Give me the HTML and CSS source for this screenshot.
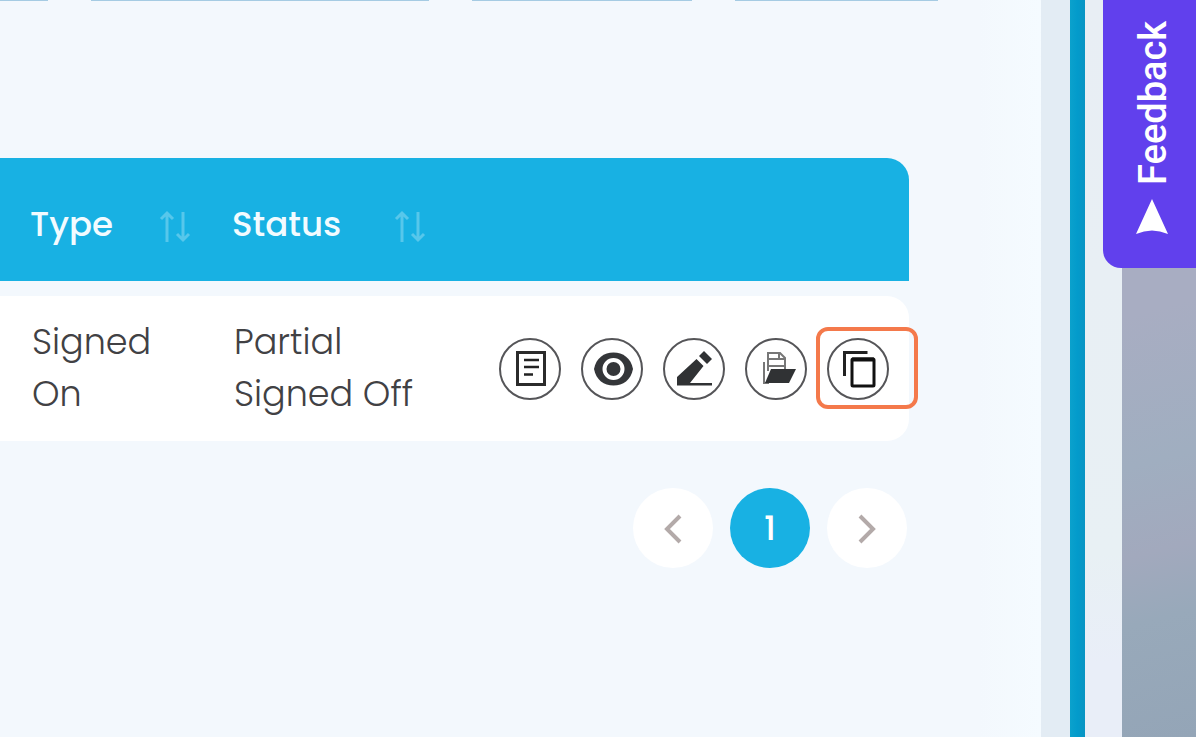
FILE: index.html
```
<!DOCTYPE html>
<html lang="en">
<head>
<meta charset="utf-8">
<title>Sign-on records</title>
<link rel="stylesheet" href="styles.css">
</head>
<body>
<main class="panel">
  <div class="filters">
    <span class="filter"></span><span class="filter"></span><span class="filter"></span><span class="filter"></span>
  </div>
  <table class="records">
    <colgroup><col class="col-type"><col class="col-status"><col></colgroup>
    <thead>
      <tr>
        <th><span class="heading heading-type">Type
          <svg class="sort" width="34" height="38" viewBox="0 0 34 38" aria-hidden="true"><path d="M9 36V7M3 13l6-6 6 6M25 6v28M19 28l6 6 6-6"/></svg></span></th>
        <th><span class="heading heading-status">Status
          <svg class="sort" width="34" height="38" viewBox="0 0 34 38" aria-hidden="true"><path d="M9 36V7M3 13l6-6 6 6M25 6v28M19 28l6 6 6-6"/></svg></span></th>
        <th></th>
      </tr>
    </thead>
    <tbody>
      <tr>
        <td>Signed<br>On</td>
        <td>Partial<br>Signed Off</td>
        <td class="actions-cell">
          <div class="actions">
            <button class="action" aria-label="Details"><svg width="60" height="60" viewBox="0 0 60 60"><path d="M16.500 12.500h27v32h-27z" fill="none" stroke="#2b2b2b" stroke-width="3"/><path d="M23 20h15M23 27h15M23 34.500h9" stroke="#222" stroke-width="2.500"/></svg></button>
            <button class="action" aria-label="View"><svg width="60" height="60" viewBox="0 0 60 60"><path d="M11 29C13 18 21 12.500 30.500 12.500S48 18 50 29C48 40 40 45.500 30.500 45.500S13 40 11 29z" fill="#343639"/><circle cx="30.500" cy="29" r="9" fill="#343639" stroke="#fff" stroke-width="4"/><circle cx="30.500" cy="29" r="5" fill="#343639"/></svg></button>
            <button class="action" aria-label="Edit"><svg width="60" height="60" viewBox="0 0 60 60"><path d="M12 45V37L31.500 19l7 7L25 43h22v2.500H12z" fill="#303234"/><path d="M34 16l5-5 8 8-5 5z" fill="#303234"/></svg></button>
            <button class="action" aria-label="Open file"><svg width="60" height="60" viewBox="0 0 60 60"><path d="M21 31V13h12l5 5v13" fill="#fff" stroke="#777" stroke-width="2"/><path d="M32 13v6h6M21 19h10M21 26h17" fill="none" stroke="#777" stroke-width="2"/><path d="M18 23h-1v20H22" fill="none" stroke="#777" stroke-width="2"/><path d="M24 29h25l-7 14H18z" fill="#303234"/></svg></button>
            <span class="highlighted"><button class="action" aria-label="Copy"><svg width="60" height="60" viewBox="0 0 60 60"><path d="M15.500 36V12.500h23" fill="none" stroke="#222" stroke-width="3"/><rect x="23" y="19" width="22" height="27" rx="1" fill="#fff" stroke="#111" stroke-width="3"/><path d="M23 19.500h22" stroke="#111" stroke-width="4"/></svg></button></span>
          </div>
        </td>
      </tr>
    </tbody>
  </table>
  <nav class="pages" aria-label="Pages">
    <button class="page" aria-label="Previous"><svg width="30" height="34" viewBox="0 0 30 34"><path d="M22 5L9 18l13 13"/></svg></button>
    <button class="page current" aria-current="page">1</button>
    <button class="page" aria-label="Next"><svg width="30" height="34" viewBox="0 0 30 34"><path d="M8 5l13 13L8 31"/></svg></button>
  </nav>
</main>
<div class="gutter"></div>
<div class="rail"></div>
<div class="margin"></div>
<aside class="photo"></aside>
<button class="feedback"><svg width="34" height="36" viewBox="0 0 34 36" aria-hidden="true"><path d="M1 1Q17 8 33 1L17 36z" fill="#fff"/></svg>Feedback</button>
</body>
</html>
```
FILE: styles.css
```
* { box-sizing: border-box; }
body {
  margin: 0;
  min-height: 100vh;
  display: flex;
  position: relative;
  overflow-x: hidden;
  font-family: Poppins, Inter, "Open Sans", sans-serif;
  color: #414144;
}
button { border: 0; padding: 0; font: inherit; cursor: pointer; }
.panel {
  flex: 1;
  min-width: 0;
  padding-right: 132px;
  background: linear-gradient(90deg, #f3f8fd 0, #f3f8fd 94%, #f5fbff 100%);
}
.filters {
  display: grid;
  grid-template-columns: 48fr 338fr 220fr 203fr;
  column-gap: 43px;
  margin-right: -29px;
}
.filter { height: 1px; background: #a5cbe3; }
.records {
  width: 100%;
  margin-top: 142px;
  table-layout: fixed;
  border-collapse: separate;
  border-spacing: 0 15px;
}
.col-type { width: 202px; }
.col-status { width: 267px; }
th {
  height: 123px;
  padding: 10px 0 0 30px;
  background: #18b1e3;
  color: #f2fbff;
  text-align: left;
  font-size: 34px;
  font-weight: 500;
}
th:last-child { border-top-right-radius: 22px; }
.heading { display: flex; align-items: center; justify-content: space-between; }
.heading-type { width: 162px; }
.heading-status { width: 195px; }
.sort { fill: none; stroke: #57c7eb; stroke-width: 3; }
td {
  height: 145px;
  padding: 0 0 2px 32px;
  background: #fff;
  font-size: 35px;
  font-weight: 300;
  line-height: 52px;
  white-space: nowrap;
}
td:last-child { border-radius: 0 22px 22px 0; }
.actions-cell { padding: 0 20px 0 0; }
.actions { display: flex; justify-content: flex-end; gap: 20px; }
.action {
  display: grid;
  place-items: center;
  width: 62px;
  height: 62px;
  border: 2px solid #555558;
  border-radius: 50%;
  background: #fff;
}
.highlighted { position: relative; }
.highlighted::after {
  content: "";
  position: absolute;
  inset: -11px -29px -9px -11px;
  border: 4px solid #f4794b;
  border-radius: 12px;
  pointer-events: none;
}
.pages { display: flex; justify-content: flex-end; gap: 17px; margin-top: 32px; padding-right: 2px; }
.page {
  display: grid;
  place-items: center;
  width: 80px;
  height: 80px;
  border-radius: 50%;
  background: #fff;
  color: #fff;
  font-size: 34px;
  font-weight: 500;
}
.page svg { fill: none; stroke: #b3aaa9; stroke-width: 4; }
.current { background: #18b1e3; }
.gutter { width: 29px; background: #e3ecf4; }
.rail { width: 15px; background: linear-gradient(90deg, #0ba1cc, #039bcb 50%, #0994c3); }
.margin { width: 37px; background: linear-gradient(#e8eef4, #e8f0f4 75%, #e9eef8 90%); }
.photo { width: 74px; background: linear-gradient(165deg, #a8adc2 42%, #a0aec0 62%, #a2a9bd 74%, #98a9ba 83%, #94a5b7); }
.feedback {
  position: absolute;
  top: 0;
  right: 0;
  display: flex;
  align-items: center;
  justify-content: flex-start;
  gap: 14px;
  width: 93px;
  height: 268px;
  padding: 33px 6px 0 0;
  writing-mode: vertical-rl;
  transform: rotate(180deg);
  border-radius: 0 18px 0 0;
  background: #6140ed;
  color: #fff;
  font-family: Roboto, sans-serif;
  font-size: 38px;
  font-weight: 500;
}
```
